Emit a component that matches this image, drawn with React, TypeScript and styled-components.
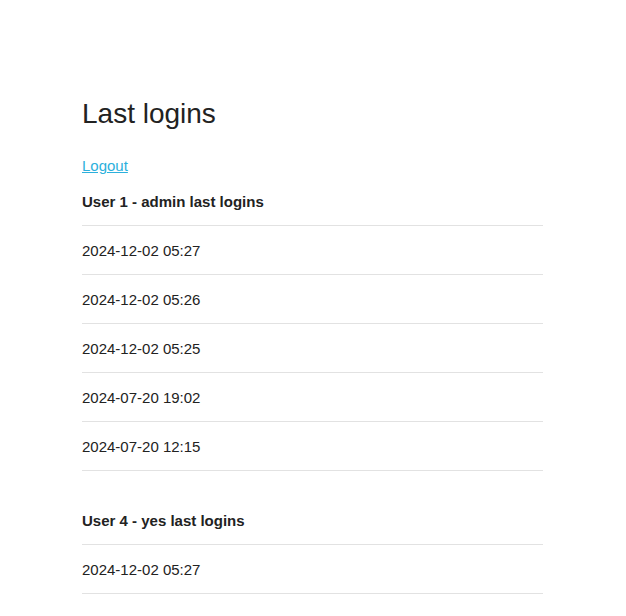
import styled, { createGlobalStyle } from "styled-components";

const GlobalStyle = createGlobalStyle`
    body {
        margin: 0;
        background: #ffffff;
        font-family: "Liberation Sans", Arial, sans-serif;
        color: #222222;
    }
`;

const Container = styled.div`
    width: 461px;
    margin-left: 82px;
    padding-top: 96px;
`;

const Title = styled.h1`
    margin: 0 0 23px 0;
    font-size: 28px;
    font-weight: 400;
    line-height: 36px;
`;

const LogoutLink = styled.a`
    display: block;
    width: fit-content;
    font-size: 15px;
    line-height: 22px;
    color: #2cb0dc;
    text-decoration: underline;
`;

const Group = styled.section`
    margin-bottom: 25px;
`;

const GroupTitle = styled.h2`
    margin: 0;
    padding: 14px 0 12px 0;
    font-size: 15px;
    font-weight: 700;
    line-height: 22px;
    border-bottom: 1px solid #e2e2e2;
`;

const LoginList = styled.ul`
    list-style: none;
    margin: 0;
    padding: 0;
`;

const LoginRow = styled.li`
    padding: 14px 0 12px 0;
    font-size: 15px;
    line-height: 22px;
    border-bottom: 1px solid #e2e2e2;
`;

interface IUserLogins {
    id: number,
    name: string,
    logins: string[],
}

const users: IUserLogins[] = [
    {
        id: 1,
        name: "admin",
        logins: [
            "2024-12-02 05:27",
            "2024-12-02 05:26",
            "2024-12-02 05:25",
            "2024-07-20 19:02",
            "2024-07-20 12:15",
        ],
    },
    {
        id: 4,
        name: "yes",
        logins: ["2024-12-02 05:27"],
    },
];

function App() {
    return (
        <>
            <GlobalStyle />
            <Container>
                <Title>Last logins</Title>
                <LogoutLink href="#">Logout</LogoutLink>
                {users.map((user) => (
                    <Group key={user.id}>
                        <GroupTitle>User {user.id} - {user.name} last logins</GroupTitle>
                        <LoginList>
                            {user.logins.map((login, i) => (
                                <LoginRow key={i}>{login}</LoginRow>
                            ))}
                        </LoginList>
                    </Group>
                ))}
            </Container>
        </>
    );
}
export default App;
